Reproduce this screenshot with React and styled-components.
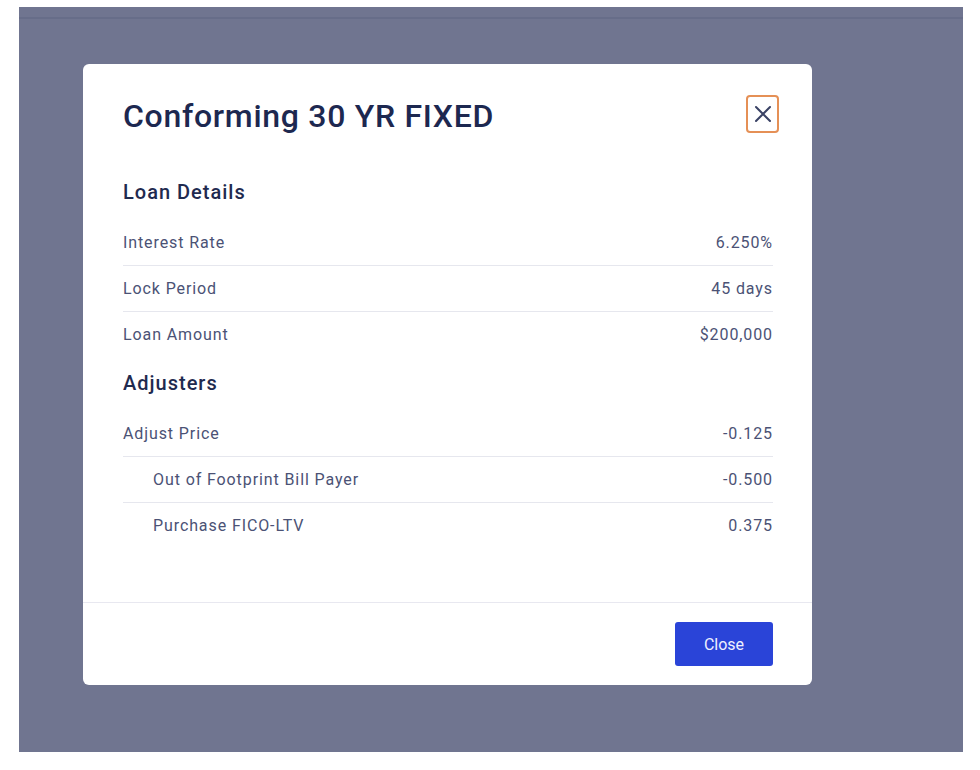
import React from 'react';
import styled, { createGlobalStyle } from 'styled-components';

const GlobalStyle = createGlobalStyle`
  body {
    margin: 0;
    background: #ffffff;
    font-family: Roboto, "Liberation Sans", sans-serif;
  }
`;

const Backdrop = styled.div`
  margin: 7px 17px 0 19px;
  height: 745px;
  background: #707590;
  overflow: hidden;
`;

// faint header border showing through the overlay
const TopRule = styled.div`
  margin-top: 10px;
  height: 2px;
  background: #676d89;
`;

const Modal = styled.div`
  width: 729px;
  margin: 45px 0 0 64px;
  background: #ffffff;
  border-radius: 6px;
`;

const Header = styled.div`
  display: flex;
  justify-content: space-between;
  align-items: flex-start;
  padding: 33px 33px 0 40px;
`;

const Title = styled.h2`
  margin: 0;
  font-size: 32px;
  line-height: 1.2;
  font-weight: 500;
  letter-spacing: 0.7px;
  color: #1d2850;
`;

const IconButton = styled.button`
  width: 33px;
  height: 38px;
  margin-top: -2px;
  padding: 0;
  display: flex;
  align-items: center;
  justify-content: center;
  background: #ffffff;
  border: 2px solid #e59056;
  border-radius: 4px;
  color: #3a4265;
  cursor: pointer;
`;

const Body = styled.div`
  padding: 45px 39px 54px 40px;
`;

const SectionTitle = styled.h3`
  margin: ${({ $first }) => ($first ? '0' : '14px')} 0 16px;
  font-size: 20px;
  line-height: 24px;
  font-weight: 500;
  letter-spacing: 1px;
  color: #1f2a4f;
`;

const Row = styled.div`
  display: flex;
  justify-content: space-between;
  align-items: center;
  height: 45px;
  border-bottom: 1px solid #e6e7ee;
  font-size: 16px;
  letter-spacing: 0.9px;
  color: #4b5275;

  &:last-child {
    border-bottom: none;
  }
`;

const Label = styled.span`
  padding-left: ${({ $indent }) => ($indent ? '30px' : '0')};
`;

const Footer = styled.div`
  display: flex;
  justify-content: flex-end;
  padding: 19px 39px 19px;
  border-top: 1px solid #e8e8f0;
`;

const PrimaryButton = styled.button`
  width: 98px;
  height: 44px;
  border: none;
  border-radius: 3px;
  background: #2a44d8;
  color: #eef0ff;
  font-family: Roboto, "Liberation Sans", sans-serif;
  font-size: 16px;
  cursor: pointer;
`;

const loanDetails = [
  { label: 'Interest Rate', value: '6.250%' },
  { label: 'Lock Period', value: '45 days' },
  { label: 'Loan Amount', value: '$200,000' },
];

const adjusters = [
  { label: 'Adjust Price', value: '-0.125' },
  { label: 'Out of Footprint Bill Payer', value: '-0.500', indent: true },
  { label: 'Purchase FICO-LTV', value: '0.375', indent: true },
];

const Section = ({ title, rows, first }) => (
  <div>
    <SectionTitle $first={first}>{title}</SectionTitle>
    <div>
      {rows.map((r) => (
        <Row key={r.label}>
          <Label $indent={r.indent}>{r.label}</Label>
          <span>{r.value}</span>
        </Row>
      ))}
    </div>
  </div>
);

const CloseIcon = () => (
  <svg width="18" height="18" viewBox="0 0 18 18" fill="none">
    <path d="M2 2L16 16M16 2L2 16" stroke="currentColor" strokeWidth="2" strokeLinecap="round" />
  </svg>
);

export default function App() {
  return (
    <>
      <GlobalStyle />
      <Backdrop>
        <TopRule />
        <Modal>
          <Header>
            <Title>Conforming 30 YR FIXED</Title>
            <IconButton aria-label="close">
              <CloseIcon />
            </IconButton>
          </Header>
          <Body>
            <Section title="Loan Details" rows={loanDetails} first />
            <Section title="Adjusters" rows={adjusters} />
          </Body>
          <Footer>
            <PrimaryButton>Close</PrimaryButton>
          </Footer>
        </Modal>
      </Backdrop>
    </>
  );
}
